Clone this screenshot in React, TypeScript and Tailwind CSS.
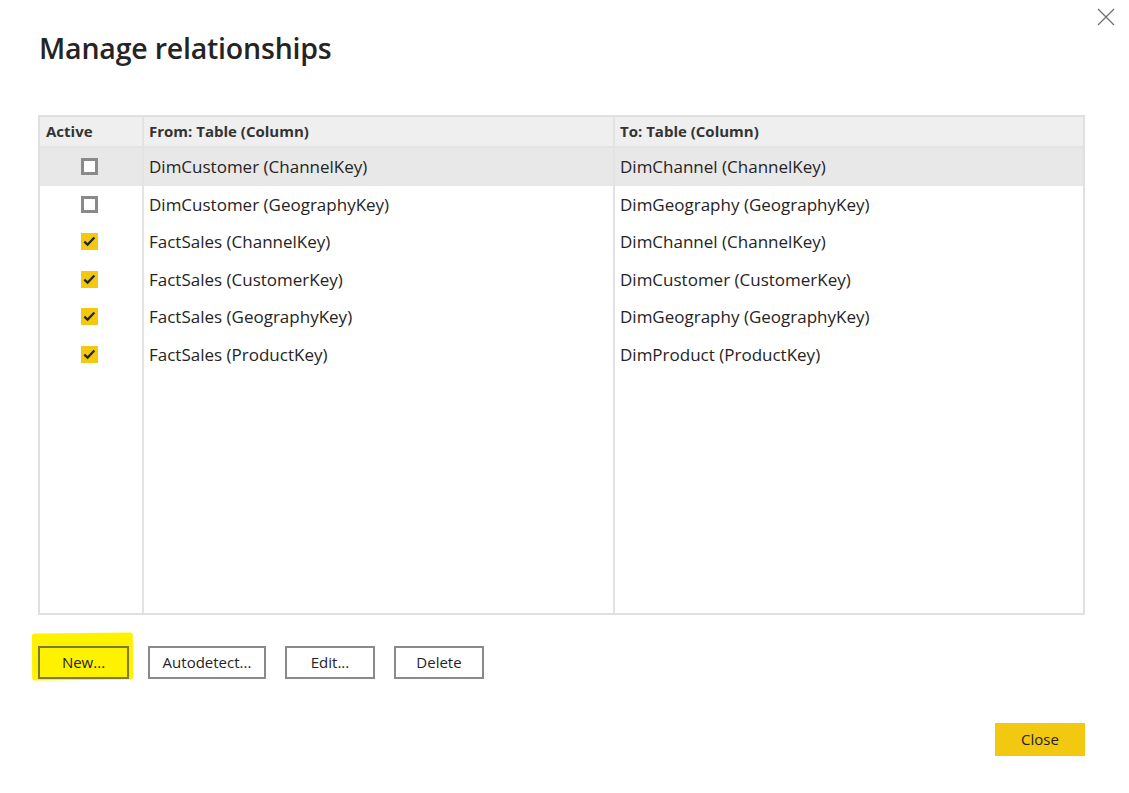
import React from "react";

const rows = [
  { active: false, from: "DimCustomer (ChannelKey)", to: "DimChannel (ChannelKey)", selected: true },
  { active: false, from: "DimCustomer (GeographyKey)", to: "DimGeography (GeographyKey)" },
  { active: true, from: "FactSales (ChannelKey)", to: "DimChannel (ChannelKey)" },
  { active: true, from: "FactSales (CustomerKey)", to: "DimCustomer (CustomerKey)" },
  { active: true, from: "FactSales (GeographyKey)", to: "DimGeography (GeographyKey)" },
  { active: true, from: "FactSales (ProductKey)", to: "DimProduct (ProductKey)" },
];

function Check({ on }: { on: boolean }) {
  if (on) {
    return (
      <div className="w-[17px] h-[17px] bg-[#f2c811]">
        <svg width="17" height="17" viewBox="0 0 17 17">
          <path d="M3.3 8.6 L6.6 11.6 L13.4 4.6" fill="none" stroke="#252423" strokeWidth="2.2" />
        </svg>
      </div>
    );
  }
  return <div className="w-[17px] h-[17px] border-[3px] border-[#8a8a8a] bg-white" />;
}

export default function App() {
  return (
    <div
      className="w-[1129px] h-[793px] bg-white relative text-[#252423] overflow-hidden"
      style={{ fontFamily: '"Open Sans", "Noto Sans", sans-serif' }}
    >
      <button className="absolute right-[14px] top-[8px] w-[18px] h-[18px] flex items-center justify-center">
        <svg width="18" height="18" viewBox="0 0 18 18">
          <path d="M1 1 L17 17 M17 1 L1 17" stroke="#6e6e6e" strokeWidth="1.2" fill="none" />
        </svg>
      </button>

      <div className="pl-[38px] pr-[44px] pt-[30px] flex flex-col">
        <h1 className="text-[28.5px] font-semibold leading-[36px] text-[#252423] tracking-[-0.2px] pl-[1px]">
          Manage relationships
        </h1>

        <div className="mt-[49px] h-[500px] border-2 border-[#e0e0e0] flex flex-col">
          <div className="flex h-[31px] bg-[#efefef] border-b-2 border-[#e3e3e3] text-[15px] font-bold text-[#333]">
            <div className="w-[104px] border-r-2 border-[#e3e3e3] flex items-center pl-[6px]">Active</div>
            <div className="w-[471px] border-r-2 border-[#e3e3e3] flex items-center pl-[5px]">From: Table (Column)</div>
            <div className="flex-1 flex items-center pl-[5px]">To: Table (Column)</div>
          </div>
          <div className="flex-1 flex flex-col">
            {rows.map((r, i) => (
              <div key={i} className={`flex h-[37.5px] text-[17px] ${r.selected ? "bg-[#e8e8e8]" : ""}`}>
                <div className="w-[104px] border-r-2 border-[#e3e3e3] flex items-center justify-center pr-[4px]">
                  <Check on={r.active} />
                </div>
                <div className="w-[471px] border-r-2 border-[#e3e3e3] flex items-center pl-[5px]">{r.from}</div>
                <div className="flex-1 flex items-center pl-[5px]">{r.to}</div>
              </div>
            ))}
            <div className="flex flex-1">
              <div className="w-[104px] border-r-2 border-[#e3e3e3]" />
              <div className="w-[471px] border-r-2 border-[#e3e3e3]" />
              <div className="flex-1" />
            </div>
          </div>
        </div>

        <div className="mt-[31px] flex items-center gap-[19px] text-[15px] text-[#252423]">
          <div className="relative">
            <div className="absolute left-[-6px] top-[-13px] w-[101px] h-[47px] bg-[#fff200] rounded-[3px] -rotate-[0.5deg]" />
            <button className="relative w-[91px] h-[33px] border-2 border-[#7a7a3a] bg-[#fff200]">New...</button>
          </div>
          <button className="w-[118px] h-[33px] border-2 border-[#8a8a8a] bg-white">Autodetect...</button>
          <button className="w-[90px] h-[33px] border-2 border-[#8a8a8a] bg-white">Edit...</button>
          <button className="w-[90px] h-[33px] border-2 border-[#8a8a8a] bg-white">Delete</button>
        </div>

        <div className="mt-[44px] flex justify-end">
          <button className="w-[90px] h-[33px] bg-[#f2c811] text-[15px] text-[#252423]">Close</button>
        </div>
      </div>
    </div>
  );
}
